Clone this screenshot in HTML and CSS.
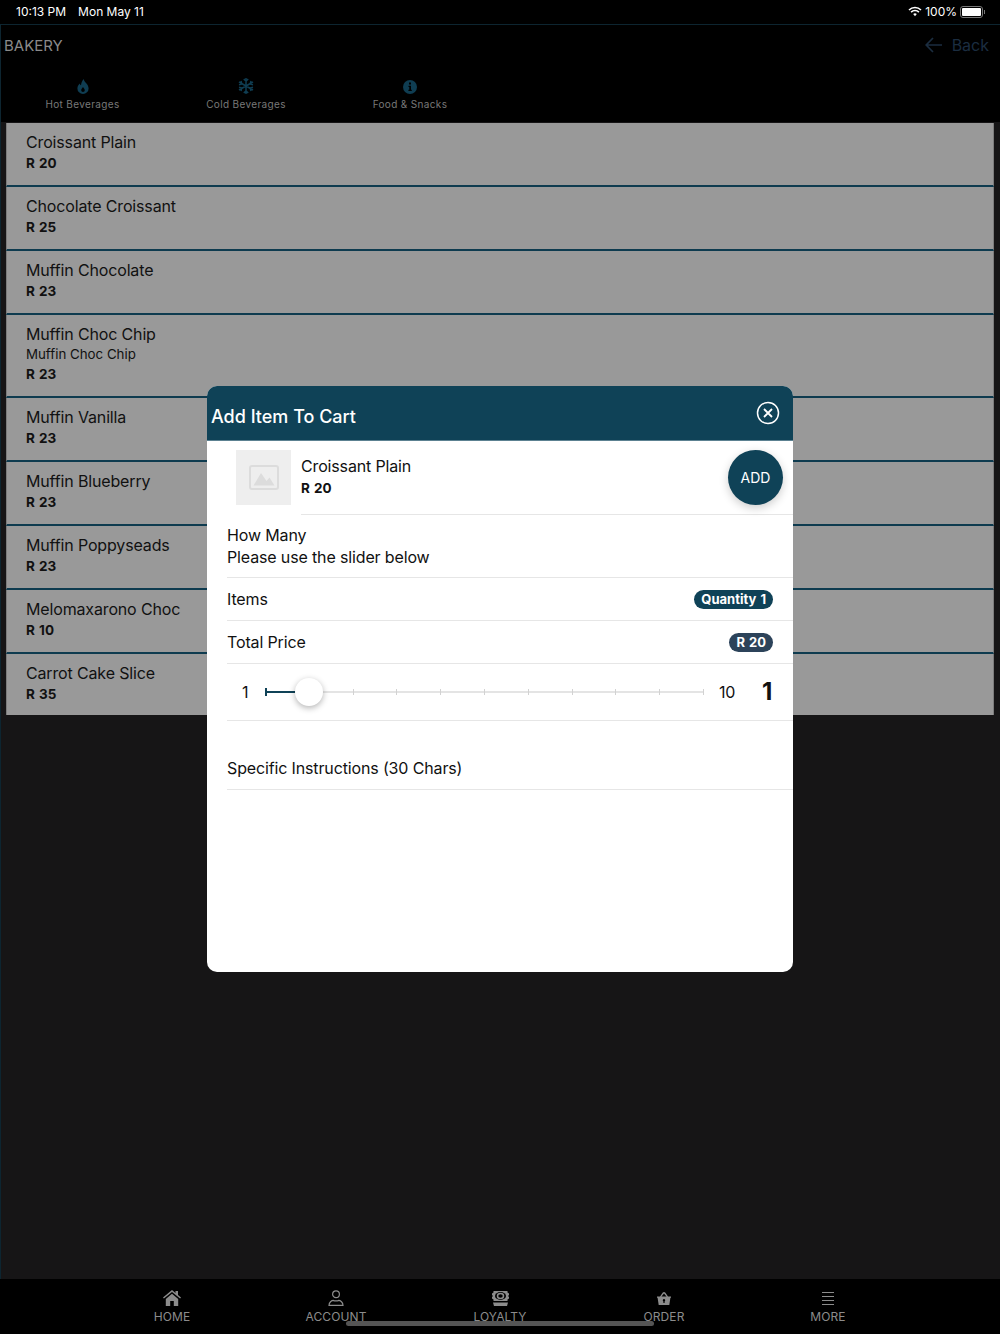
FILE: index.html
```html
<!DOCTYPE html>
<html lang="en">
<head>
  <meta charset="UTF-8">
  <title>Bakery</title>
  <link rel="stylesheet" href="styles.css">
</head>
<body>
  <div class="page">
    <div class="status-bar">
      <div class="status-left"><span>10:13 PM</span><span>Mon May 11</span></div>
      <div class="status-right">
        <svg class="wifi" width="14" height="11" viewBox="0 0 14 11"><path d="M1 4a8.6 8.6 0 0 1 12 0" fill="none" stroke="#fff" stroke-width="1.6"/><path d="M3.1 6.1a5.6 5.6 0 0 1 7.8 0" fill="none" stroke="#fff" stroke-width="1.6"/><path d="M5.2 8.1a2.6 2.6 0 0 1 3.6 0L7 10.2z" fill="#fff"/></svg>
        <span>100%</span>
        <div class="battery"><div class="battery-fill"></div></div>
        <div class="battery-tip"></div>
      </div>
    </div>

    <div class="app">
      <div class="top-bar">
        <div class="top-title">BAKERY</div>
        <div class="back">
          <svg width="18" height="16" viewBox="0 0 18 16"><path d="M8 1L1.2 8 8 15M1.5 8H17" fill="none" stroke="#1b2d40" stroke-width="1.7"/></svg>
          <span>Back</span>
        </div>
      </div>

      <div class="tabs">
        <div class="tab">
          <svg width="12" height="15" viewBox="0 0 12 15"><path fill-rule="evenodd" d="M6.6 0C7 3 11.6 5.2 11.6 9.4A5.6 5.6 0 0 1 .4 9.4C.4 7 1.800 5.500 2.600 4.400 3 5.600 3.500 6 4 6.200 4.300 4 5 2 6.600 0zM6 8C5 9.300 4.200 10 4.200 11.200a1.800 1.800 0 0 0 3.600 0C7.800 10 7 9.300 6 8z" fill="#0f3d52"/></svg>
          <span>Hot Beverages</span>
        </div>
        <div class="tab">
          <svg width="16" height="16" viewBox="0 0 16 16" fill="none" stroke="#0f3d52" stroke-width="1.5"><path d="M8 0v16M1 4l14 8M15 4L1 12M5.800 1L8 3.200 10.200 1M5.800 15L8 12.800 10.200 15M1 6.800L3.800 6 3 3M15 6.800L12.200 6 13 3M1 9.200L3.800 10 3 13M15 9.200L12.200 10 13 13"/></svg>
          <span>Cold Beverages</span>
        </div>
        <div class="tab">
          <svg width="14" height="14" viewBox="0 0 14 14"><circle cx="7" cy="7" r="7" fill="#0f3d52"/><rect x="6" y="2.500" width="2" height="2" fill="#000"/><path d="M5.500 5.800H8v4h.800v1.200H5.400V9.800h.9V7H5.500z" fill="#000"/></svg>
          <span>Food &amp; Snacks</span>
        </div>
      </div>

      <div class="list">
        <div class="item"><div class="item-name">Croissant Plain</div><div class="item-price">R 20</div></div>
        <div class="item"><div class="item-name">Chocolate Croissant</div><div class="item-price">R 25</div></div>
        <div class="item"><div class="item-name">Muffin Chocolate</div><div class="item-price">R 23</div></div>
        <div class="item item-long"><div class="item-name">Muffin Choc Chip</div><div class="item-desc">Muffin Choc Chip</div><div class="item-price">R 23</div></div>
        <div class="item"><div class="item-name">Muffin Vanilla</div><div class="item-price">R 23</div></div>
        <div class="item"><div class="item-name">Muffin Blueberry</div><div class="item-price">R 23</div></div>
        <div class="item"><div class="item-name">Muffin Poppyseads</div><div class="item-price">R 23</div></div>
        <div class="item"><div class="item-name">Melomaxarono Choc</div><div class="item-price">R 10</div></div>
        <div class="item"><div class="item-name">Carrot Cake Slice</div><div class="item-price">R 35</div></div>
      </div>
    </div>

    <div class="bottom-nav">
      <div class="nav-item">
        <svg width="18" height="16" viewBox="0 0 18 16"><path d="M9 0l3.500 2.900V1H15v4l3 2.500-.9 1L9 2 .9 8.500 0 7.500z" fill="#8c8c8c"/><path d="M2.800 9L9 3.800 15.200 9v7h-4.400v-5H7.200v5H2.800z" fill="#8c8c8c"/></svg>
        <span>HOME</span>
      </div>
      <div class="nav-item">
        <svg width="16" height="16" viewBox="0 0 16 16" fill="none" stroke="#8c8c8c" stroke-width="1.200"><circle cx="8" cy="4.200" r="3.400"/><path d="M1 15.400c0-3.200 2.600-5 4.500-5 1 .6 4 .6 5 0 1.900 0 4.500 1.800 4.500 5z"/></svg>
        <span>ACCOUNT</span>
      </div>
      <div class="nav-item">
        <svg width="17" height="15" viewBox="0 0 17 15"><path d="M1.500 0h14v1.500L17 2.500v1.500l-1 1 1 1v1.500l-1.500 1V10h-14V8.500L0 7.500V6l1-1-1-1V2.500l1.500-1z" fill="#8c8c8c"/><ellipse cx="8.500" cy="5" rx="5.500" ry="3.900" fill="#000"/><ellipse cx="8.500" cy="5" rx="3" ry="2.500" fill="none" stroke="#8c8c8c" stroke-width="1.500"/><path d="M1 11.500h15l-1 3.500H2z" fill="#8c8c8c"/></svg>
        <span>LOYALTY</span>
      </div>
      <div class="nav-item">
        <svg width="14" height="14" viewBox="0 0 14 14"><path fill-rule="evenodd" d="M5.800.6L7 0l1.200.6L11 4.500h3v1.300h-.6L12.300 13H1.700L.6 5.800H0V4.500h3zM4.500 4.500h5L7 1.500zM7 7a1.300 1.300 0 0 0-.6 2.400V11h1.200V9.400A1.300 1.300 0 0 0 7 7z" fill="#8c8c8c"/></svg>
        <span>ORDER</span>
      </div>
      <div class="nav-item">
        <svg width="12" height="14" viewBox="0 0 12 14" fill="#8c8c8c"><rect width="12" height="1"/><rect y="4" width="12" height="1"/><rect y="8" width="12" height="1"/><rect y="12" width="12" height="1"/></svg>
        <span>MORE</span>
      </div>
    </div>
    <div class="home-indicator"></div>

    <div class="modal">
      <div class="modal-head">
        <div class="modal-title">Add Item To Cart</div>
        <svg class="modal-close" width="24" height="24" viewBox="0 0 24 24" fill="none" stroke="#fff"><circle cx="12" cy="12" r="10.500" stroke-width="1.500"/><path d="M8 8l8 8M16 8l-8 8" stroke-width="1.800"/></svg>
      </div>

      <div class="product">
        <div class="thumb">
          <svg width="30" height="26" viewBox="0 0 30 26"><rect x="1" y="1" width="28" height="23" rx="2" fill="none" stroke="#dcdcdc" stroke-width="2"/><path d="M4.500 20.500L12 8l5.500 8 3-3.500 5 8z" fill="#dcdcdc"/></svg>
        </div>
        <div class="product-info">
          <div class="product-name">Croissant Plain</div>
          <div class="product-price">R 20</div>
          <button class="add-btn">ADD</button>
        </div>
      </div>

      <div class="rows">
        <div class="row row-text">How Many<br>Please use the slider below</div>
        <div class="row"><span>Items</span><span class="badge badge-teal">Quantity 1</span></div>
        <div class="row"><span>Total Price</span><span class="badge badge-slate">R 20</span></div>
        <div class="row row-slider">
          <span class="slider-min">1</span>
          <div class="slider">
            <div class="ticks">
              <i></i><i></i><i></i><i></i><i></i><i></i><i></i><i></i><i></i><i></i><i></i>
            </div>
            <div class="slider-fill"></div>
            <div class="slider-thumb"></div>
          </div>
          <span class="slider-max">10</span>
          <span class="slider-value">1</span>
        </div>
        <div class="row row-instructions">Specific Instructions (30 Chars)</div>
      </div>
    </div>
  </div>
</body>
</html>
```

FILE: styles.css
```css
* { box-sizing:border-box; }
html, body { margin:0; padding:0; }
body { background:#161516; font-family:Inter, "Liberation Sans", sans-serif; color:#000; }

.page { position:relative; width:1000px; height:1334px; display:flex; flex-direction:column; overflow:hidden; }

.status-bar {
  height:24px; background:#000; color:#fff; font-size:12px;
  display:flex; justify-content:space-between; align-items:center;
  padding:0 15px 1px 16px; flex-shrink:0;
}
.status-left { display:flex; gap:12px; }
.status-right { display:flex; align-items:center; gap:4px; }
.wifi { margin-right:-1px; }
.battery { width:23px; height:12px; border:1px solid #777; border-radius:3px; padding:1px; margin-left:-1px; }
.battery-fill { height:100%; background:#fff; border-radius:1px; }
.battery-tip { width:1px; height:4px; background:#777; margin-left:-3px; }

.app { flex:1; background:#161516; border-left:1px solid #0d2530; border-top:1px solid #0d2530; }

.top-bar {
  height:42px; background:#000; display:flex; justify-content:space-between; align-items:center;
  padding:0 11px 1px 3px;
}
.top-title { font-size:15px; color:#8a8a8a; }
.back { display:flex; align-items:center; gap:9px; font-size:16px; color:#1b2d40; margin-bottom:2px; }

.tabs { height:55px; background:#000; display:flex; padding:11px 0 0 0; }
.tab {
  width:164px; display:flex; flex-direction:column; align-items:center; gap:4px;
  font-size:10px; letter-spacing:.35px; color:#787878; height:32px; justify-content:flex-end;
}
.tab:first-child { width:163px; }

.list { padding:1px 6px 0 5px; background:#161516; }
.item {
  background:#999; padding:9px 19px 13px 19px;
  border-bottom:2px solid #0e3b4f; border-left:1px solid #7c7c7c; border-right:1px solid #7c7c7c;
}
.item:last-child { border-bottom:none; padding-bottom:12px; }
.item-name { font-size:16px; line-height:20px; letter-spacing:-.15px; color:#111; }
.item-desc { font-size:13.300px; line-height:20px; color:#111; }
.item-price { font-size:13.500px; font-weight:700; word-spacing:1px; line-height:18px; color:#111; margin-top:2px; }
.item-long .item-price { margin-top:1px; }

.bottom-nav { height:55px; background:#000; display:flex; justify-content:center; flex-shrink:0; }
.nav-item {
  width:164px; display:flex; flex-direction:column; align-items:center; justify-content:flex-end; gap:3px;
  padding-bottom:10px; font-size:12px; letter-spacing:.1px; color:#8c8c8c;
}
.home-indicator {
  position:absolute; left:346px; bottom:8px; width:308px; height:5px;
  border-radius:3px; background:#555;
}

.modal {
  position:absolute; left:207px; top:386px; width:586px; height:586px;
  background:#fff; border-radius:10px; overflow:hidden;
}
.modal-head {
  height:55px; background:#0f4257; color:#fff; display:flex; justify-content:space-between; align-items:center;
  padding:0 13px 0 4px; border-bottom:1px solid #5c8191;
}
.modal-title { font-size:18px; font-weight:500; padding-top:7px; }
.modal-close { margin-top:-1px; }

.product { display:flex; padding:9px 0 0 29px; gap:8px; height:74px; }
.thumb {
  width:55px; height:55px; background:#eee; display:flex; align-items:center; justify-content:center;
  flex-shrink:0;
}
.product-info { flex:1; position:relative; border-bottom:1px solid #e6e6e6; height:65px; margin-left:2px; padding-top:6px; }
.product-name { font-size:16px; line-height:20px; letter-spacing:-.15px; color:#111; }
.product-price { font-size:13.500px; font-weight:700; word-spacing:1px; line-height:18px; color:#111; margin-top:3px; }
.add-btn {
  position:absolute; right:10px; top:0; width:55px; height:55px; border:none; border-radius:50%;
  background:#0f4257; color:#fff; font:14px Inter, sans-serif;
  box-shadow:0 3px 10px rgba(0,0,0,.2);
}

.rows { padding-left:20px; font-size:16px; letter-spacing:-.14px; color:#111; }
.row {
  display:flex; justify-content:space-between; align-items:center;
  height:43px; border-bottom:1px solid #e6e6e6; padding-right:20px;
}
.row-text { display:block; height:63px; line-height:22px; padding-top:9px; }
.badge {
  color:#fff; font-size:13px; font-weight:700; border-radius:10px; padding:0 7px;
  height:19px; line-height:19px; letter-spacing:0; word-spacing:1px;
}
.badge-teal { background:#0f4257; }
.badge-slate { background:#2c435a; }

.row-slider { height:57px; justify-content:flex-start; padding-right:0; padding-bottom:1px; }
.slider-min { width:38px; padding-left:15px; font-size:16px; }
.slider { position:relative; width:439px; height:8px; }
.ticks {
  position:absolute; left:0; right:0; top:3px; height:2px; background:#e4e4e4;
  display:flex; justify-content:space-between; align-items:center;
}
.ticks i { display:block; width:1px; height:6px; background:#d2d2d2; }
.slider-fill { position:absolute; left:0; top:3px; width:31px; height:2px; background:#0f4257; }
.slider-fill::before { content:""; position:absolute; left:0; top:-3px; width:2px; height:8px; background:#0f4257; }
.slider-thumb {
  position:absolute; left:30px; top:-10px; width:28px; height:28px; border-radius:50%;
  background:#fff; box-shadow:0 2px 6px rgba(0,0,0,.3);
}
.slider-max { margin-left:15px; width:30px; font-size:16px; }
.slider-value { margin-left:13px; font-size:24px; font-weight:700; }

.row-instructions { height:69px; padding-top:25px; }
```
